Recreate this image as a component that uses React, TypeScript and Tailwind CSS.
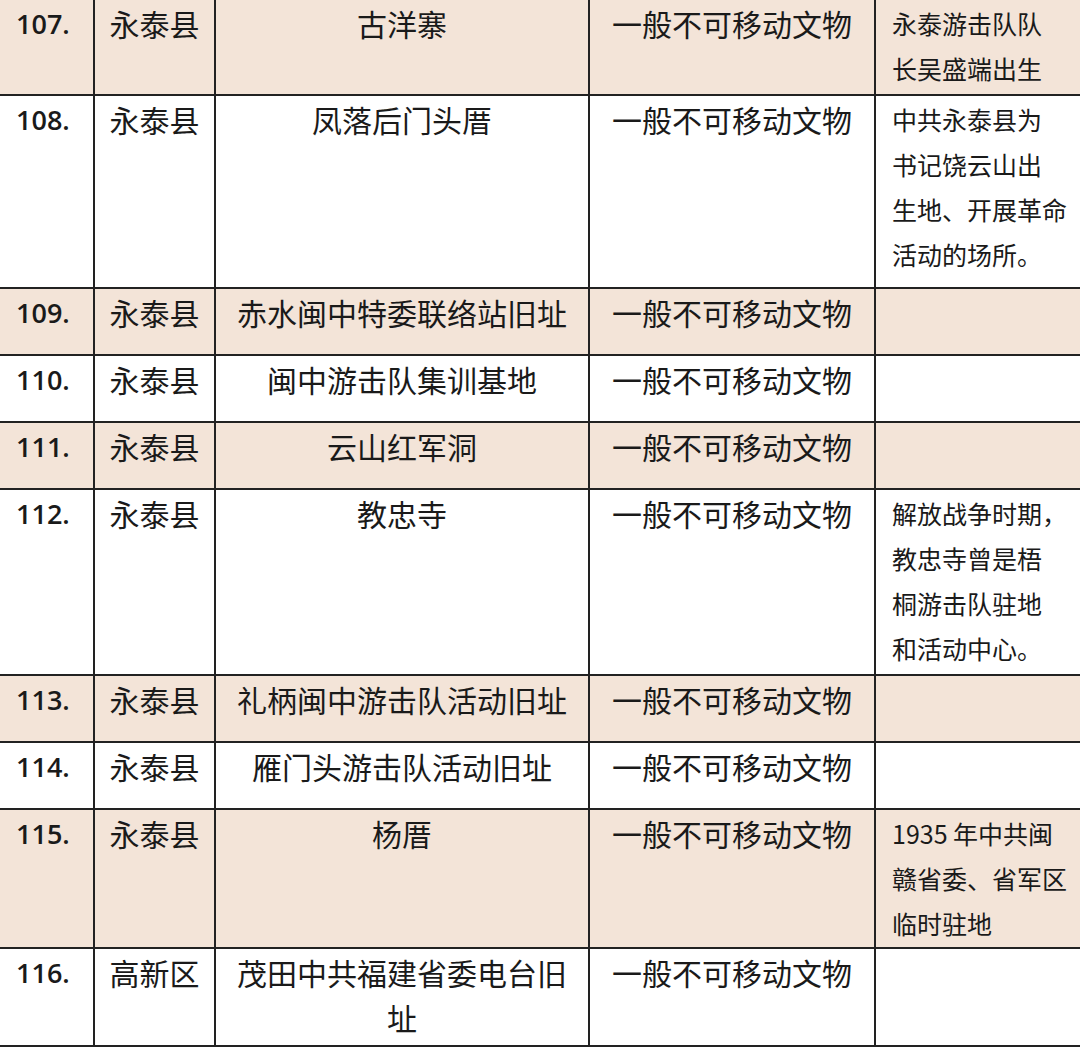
const rows = [
  { no: "107.", county: "永泰县", name: ["古洋寨"], level: "一般不可移动文物", note: ["永泰游击队队", "长吴盛端出生"], h: "h-[96px]" },
  { no: "108.", county: "永泰县", name: ["凤落后门头厝"], level: "一般不可移动文物", note: ["中共永泰县为", "书记饶云山出", "生地、开展革命", "活动的场所。"], h: "h-[193px]" },
  { no: "109.", county: "永泰县", name: ["赤水闽中特委联络站旧址"], level: "一般不可移动文物", note: [], h: "h-[67px]" },
  { no: "110.", county: "永泰县", name: ["闽中游击队集训基地"], level: "一般不可移动文物", note: [], h: "h-[67px]" },
  { no: "111.", county: "永泰县", name: ["云山红军洞"], level: "一般不可移动文物", note: [], h: "h-[67px]" },
  { no: "112.", county: "永泰县", name: ["教忠寺"], level: "一般不可移动文物", note: ["解放战争时期，", "教忠寺曾是梧", "桐游击队驻地", "和活动中心。"], h: "h-[186px]" },
  { no: "113.", county: "永泰县", name: ["礼柄闽中游击队活动旧址"], level: "一般不可移动文物", note: [], h: "h-[67px]" },
  { no: "114.", county: "永泰县", name: ["雁门头游击队活动旧址"], level: "一般不可移动文物", note: [], h: "h-[67px]" },
  { no: "115.", county: "永泰县", name: ["杨厝"], level: "一般不可移动文物", note: ["1935 年中共闽", "赣省委、省军区", "临时驻地"], h: "h-[139px]" },
  { no: "116.", county: "高新区", name: ["茂田中共福建省委电台旧", "址"], level: "一般不可移动文物", note: [], h: "h-[98px]" },
]

const cjk = "font-['Noto_Sans_CJK_SC','Noto_Sans',sans-serif]"

export default function App() {
  return (
    <div className="w-[1080px] h-[1055px] bg-white overflow-hidden text-[#1a1a1a]">
      <div className="grid grid-cols-[95px_121px_374px_286px_204px]">
        {rows.map((r, i) => {
          const bg = i % 2 === 0 ? "bg-[#f3e4d8]" : "bg-white"
          const cell = `${r.h} ${bg} border-b-2 border-[#222] pt-[1px] leading-[45px]`
          return (
            <div key={r.no} className="contents">
              <div className={`${cell} border-r-2 pl-[16px] font-['Open_Sans',sans-serif] font-semibold text-[27px]`}>{r.no}</div>
              <div className={`${cell} border-r-2 text-center ${cjk} text-[30px]`}>{r.county}</div>
              <div className={`${cell} border-r-2 text-center ${cjk} text-[30px]`}>
                {r.name.map((l) => (
                  <div key={l}>{l}</div>
                ))}
              </div>
              <div className={`${cell} border-r-2 text-center ${cjk} text-[30px]`}>{r.level}</div>
              <div className={`${cell} pl-[16px] ${cjk} text-[25px] whitespace-nowrap`}>
                {r.note.map((l) => (
                  <div key={l}>{l}</div>
                ))}
              </div>
            </div>
          )
        })}
      </div>
    </div>
  )
}
